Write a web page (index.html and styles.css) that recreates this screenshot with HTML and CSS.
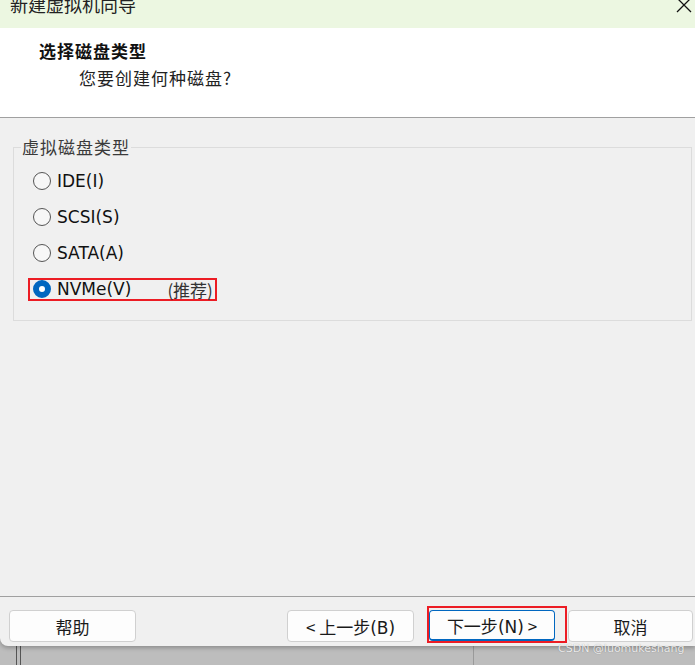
FILE: index.html
```html
<!DOCTYPE html>
<html lang="zh-CN">
<head>
    <meta charset="UTF-8">
    <title>新建虚拟机向导</title>
    <link rel="stylesheet" href="styles.css">
</head>
<body>
    <div class="dialog">
        <div class="titlebar">
            <span class="title">新建虚拟机向导</span>
            <svg class="close" width="16" height="16" viewBox="0 0 16 16">
                <path d="M1 1 L15 15 M15 1 L1 15" stroke="#111" stroke-width="1.3" fill="none"/>
            </svg>
        </div>

        <div class="header">
            <div class="header-title">选择磁盘类型</div>
            <div class="header-sub">您要创建何种磁盘?</div>
        </div>

        <div class="content">
            <fieldset class="group">
                <legend>虚拟磁盘类型</legend>
                <div class="row">
                    <span class="radio"></span><span class="label">IDE(I)</span>
                </div>
                <div class="row">
                    <span class="radio"></span><span class="label">SCSI(S)</span>
                </div>
                <div class="row">
                    <span class="radio"></span><span class="label">SATA(A)</span>
                </div>
                <div class="row">
                    <div class="mark mark-radio">
                        <span class="radio checked"></span><span class="label">NVMe(V)</span>
                        <span class="hint">(推荐)</span>
                    </div>
                </div>
            </fieldset>
        </div>

        <div class="footer">
            <button class="btn btn-help">帮助</button>
            <div class="spacer"></div>
            <button class="btn">&lt; 上一步<span class="key">(B)</span></button>
            <div class="mark mark-next">
                <button class="btn btn-focus">下一步<span class="key">(N)</span> &gt;</button>
            </div>
            <button class="btn btn-cancel">取消</button>
        </div>
    </div>

    <div class="desktop">
        <div class="frame-left"></div>
        <div class="frame-mid"></div>
    </div>

    <div class="watermark">CSDN @luomukeshang</div>
</body>
</html>
```

FILE: styles.css
```css
body {
    margin: 0;
    width: 695px;
    height: 665px;
    overflow: hidden;
    background-color: #bdbdbd;
    font-family: "DejaVu Sans", "Noto Sans CJK SC", sans-serif;
    color: #1a1a1a;
    position: relative;
}
.dialog {
    height: 646px;
    background-color: #f0f0f0;
    display: flex;
    flex-direction: column;
    border-bottom-left-radius: 8px;
    box-shadow: 0 2px 4px rgba(0, 0, 0, 0.25);
    position: relative;
}
.titlebar {
    height: 28px;
    background-color: #ecf7e1;
    display: flex;
    justify-content: space-between;
    align-items: flex-start;
    overflow: hidden;
}
.title {
    font-family: "Noto Sans CJK SC", sans-serif;
    font-size: 18px;
    line-height: 18px;
    margin: -5px 0 0 10px;
    color: #222;
}
.close {
    margin: -3px 3px 0 0;
}
.header {
    height: 90px;
    box-sizing: border-box;
    background-color: #fff;
    border-bottom: 1px solid #a0a0a0;
    padding-top: 13px;
}
.header-title {
    font-family: "Noto Sans CJK SC", sans-serif;
    font-size: 17px;
    font-weight: bold;
    line-height: 20px;
    letter-spacing: 1px;
    padding-left: 39px;
    color: #111;
}
.header-sub {
    font-family: "Noto Sans CJK SC", sans-serif;
    font-size: 17px;
    line-height: 20px;
    letter-spacing: 1px;
    padding-left: 79px;
    margin-top: 7px;
    color: #222;
}
.content {
    flex: 1;
    padding: 19px 3px 0 13px;
}
.group {
    margin: 0;
    padding: 6px 0 13px 0;
    border: 1px solid #dcdcdc;
}
.group legend {
    font-family: "Noto Sans CJK SC", sans-serif;
    font-size: 17px;
    line-height: 20px;
    letter-spacing: 1px;
    color: #3a3a3a;
    margin-left: 7px;
    padding: 0 1px;
}
.row {
    height: 36px;
    display: flex;
    align-items: center;
    padding-left: 19px;
}
.radio {
    width: 18px;
    height: 18px;
    border: 1px solid #555;
    border-radius: 50%;
    box-sizing: border-box;
    background-color: #f7f7f7;
    margin-right: 6px;
}
.radio.checked {
    border: 6px solid #0067c0;
    background-color: #fff;
}
.label {
    font-size: 17px;
    color: #111;
}
.hint {
    font-family: "Noto Sans CJK SC", sans-serif;
    font-size: 17px;
    color: #333;
    margin-left: 36px;
}
.mark {
    border: 2px solid #ec1c24;
    display: flex;
    align-items: center;
}
.mark-radio {
    height: 23px;
    box-sizing: border-box;
    width: 189px;
    padding-left: 3px;
    margin-left: -5px;
}
.footer {
    height: 50px;
    box-sizing: border-box;
    border-top: 1px solid #a0a0a0;
    padding-top: 13px;
    display: flex;
    align-items: flex-start;
}
.spacer {
    flex: 1;
}
.btn {
    height: 32px;
    width: 127px;
    background-color: #fdfdfd;
    border: 1px solid #d0d0d0;
    border-radius: 4px;
    font-family: "Noto Sans CJK SC", sans-serif;
    font-size: 17px;
    color: #1a1a1a;
    padding: 0;
}
.key {
    font-family: "DejaVu Sans", sans-serif;
}
.btn-help {
    margin-left: 9px;
}
.mark-next {
    margin: -4px 1px 0 13px;
    height: 37px;
    box-sizing: border-box;
    align-items: flex-start;
    padding: 2px 10px 0 0;
}
.btn-focus {
    width: 126px;
    height: 31px;
    border: 1px solid #0067c0;
    border-bottom-width: 2px;
}
.btn-cancel {
    width: 125px;
    margin-right: 2px;
}
.desktop {
    height: 19px;
    display: flex;
}
.frame-left {
    width: 3px;
    margin-left: 16px;
    border-left: 1px solid #555;
    border-right: 1px solid #555;
}
.frame-mid {
    margin-left: 452px;
    border-left: 1px solid #9a9a9a;
}
.watermark {
    position: absolute;
    left: 558px;
    top: 642px;
    white-space: nowrap;
    font-family: "DejaVu Sans", sans-serif;
    font-size: 11px;
    color: rgba(255, 255, 255, 0.85);
    text-shadow: 0 0 1px rgba(0, 0, 0, 0.35);
}
```
